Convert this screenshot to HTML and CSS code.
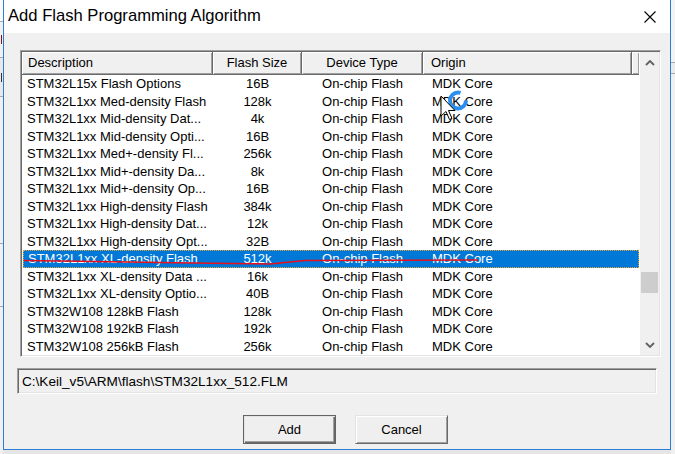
FILE: index.html
```html
<!DOCTYPE html>
<html>
<head>
<meta charset="utf-8">
<link rel="stylesheet" href="styles.css">
</head>
<body>
<div class="side side-left">
  <div class="frag f1"></div>
  <div class="frag f2"><span class="mark red"></span></div>
  <div class="frag f3"><span class="mark"></span></div>
  <div class="frag f4"></div>
  <div class="frag f5"></div>
</div>
<div class="dialog">
  <div class="titlebar">
    <span class="title">Add Flash Programming Algorithm</span>
    <svg class="close" width="12" height="12" viewBox="0 0 12 12"><path d="M0.5 0.5 L11.5 11.5 M11.5 0.5 L0.5 11.5" stroke="#000" stroke-width="1.1" fill="none"/></svg>
  </div>
  <div class="content">
    <div class="listbox">
      <div class="table">
        <div class="header">
          <div class="hcell left">Description</div>
          <div class="hcell">Flash Size</div>
          <div class="hcell">Device Type</div>
          <div class="hcell left origin">Origin</div>
          <div class="hcell filler"></div>
        </div>
        <div class="rows">
          <div class="row"><span class="c1">STM32L15x Flash Options</span><span class="c2">16B</span><span class="c3">On-chip Flash</span><span class="c4">MDK Core</span></div>
          <div class="row"><span class="c1">STM32L1xx Med-density Flash</span><span class="c2">128k</span><span class="c3">On-chip Flash</span><span class="c4">MDK Core</span></div>
          <div class="row"><span class="c1">STM32L1xx Mid-density Dat...</span><span class="c2">4k</span><span class="c3">On-chip Flash</span><span class="c4">MDK Core</span></div>
          <div class="row"><span class="c1">STM32L1xx Mid-density Opti...</span><span class="c2">16B</span><span class="c3">On-chip Flash</span><span class="c4">MDK Core</span></div>
          <div class="row"><span class="c1">STM32L1xx Med+-density Fl...</span><span class="c2">256k</span><span class="c3">On-chip Flash</span><span class="c4">MDK Core</span></div>
          <div class="row"><span class="c1">STM32L1xx Mid+-density Da...</span><span class="c2">8k</span><span class="c3">On-chip Flash</span><span class="c4">MDK Core</span></div>
          <div class="row"><span class="c1">STM32L1xx Mid+-density Op...</span><span class="c2">16B</span><span class="c3">On-chip Flash</span><span class="c4">MDK Core</span></div>
          <div class="row"><span class="c1">STM32L1xx High-density Flash</span><span class="c2">384k</span><span class="c3">On-chip Flash</span><span class="c4">MDK Core</span></div>
          <div class="row"><span class="c1">STM32L1xx High-density Dat...</span><span class="c2">12k</span><span class="c3">On-chip Flash</span><span class="c4">MDK Core</span></div>
          <div class="row"><span class="c1">STM32L1xx High-density Opt...</span><span class="c2">32B</span><span class="c3">On-chip Flash</span><span class="c4">MDK Core</span></div>
          <div class="row selected"><span class="c1">STM32L1xx XL-density Flash</span><span class="c2">512k</span><span class="c3">On-chip Flash</span><span class="c4">MDK Core</span></div>
          <div class="row"><span class="c1">STM32L1xx XL-density Data ...</span><span class="c2">16k</span><span class="c3">On-chip Flash</span><span class="c4">MDK Core</span></div>
          <div class="row"><span class="c1">STM32L1xx XL-density Optio...</span><span class="c2">40B</span><span class="c3">On-chip Flash</span><span class="c4">MDK Core</span></div>
          <div class="row"><span class="c1">STM32W108 128kB Flash</span><span class="c2">128k</span><span class="c3">On-chip Flash</span><span class="c4">MDK Core</span></div>
          <div class="row"><span class="c1">STM32W108 192kB Flash</span><span class="c2">192k</span><span class="c3">On-chip Flash</span><span class="c4">MDK Core</span></div>
          <div class="row"><span class="c1">STM32W108 256kB Flash</span><span class="c2">256k</span><span class="c3">On-chip Flash</span><span class="c4">MDK Core</span></div>
        </div>
      </div>
      <div class="scrollbar">
        <div class="sb-btn"><svg width="10" height="6" viewBox="0 0 10 6"><path d="M1 5 L5 1 L9 5" stroke="#606060" stroke-width="1.8" fill="none"/></svg></div>
        <div class="sb-track"><div class="sb-thumb"></div></div>
        <div class="sb-btn"><svg width="10" height="6" viewBox="0 0 10 6"><path d="M1 1 L5 5 L9 1" stroke="#606060" stroke-width="1.8" fill="none"/></svg></div>
      </div>
    </div>
    <div class="pathfield">C:\Keil_v5\ARM\flash\STM32L1xx_512.FLM</div>
    <div class="buttons">
      <div class="btn default">Add</div>
      <div class="btn">Cancel</div>
    </div>
  </div>
</div>
<div class="side side-right">
  <div class="frag r1"></div>
  <div class="frag r2"></div>
</div>
<svg class="overlay" width="675" height="454" viewBox="0 0 675 454">
  <polyline points="24,260.5 95,261.5 160,262.5 230,263.5 270,264 305,260.5 478,260" fill="none" stroke="#e8101a" stroke-width="1.4"/>
  <circle cx="458" cy="100.5" r="8" fill="none" stroke="#2b8ff0" stroke-width="4" stroke-dasharray="40 10"/>
  <path d="M441 96 L441 116 L446 111.5 L449.5 119.5 L452 118.5 L448.5 110.5 L455 110.5 Z" fill="#fff" stroke="#000" stroke-width="1" stroke-linejoin="miter"/>
</svg>
</body>
</html>
```
FILE: styles.css
```css
html, body {
  margin: 0;
  padding: 0;
}
body {
  width: 675px;
  height: 454px;
  overflow: hidden;
  background: #e6e6e6;
  display: flex;
  align-items: flex-start;
  position: relative;
  font-family: "Liberation Sans", Arial, sans-serif;
  font-size: 13px;
  color: #000;
}
.side {
  height: 454px;
  background: #f0f0f0;
  display: flex;
  flex-direction: column;
  overflow: hidden;
}
.side-left {
  width: 3px;
}
.side-right {
  flex: 1;
  background: #f0f0f0;
}
.frag {
  border-bottom: 1px solid #a8a8a8;
  display: flex;
  align-items: center;
}
.f1 { height: 21px; background: #fafafa; }
.f2 { height: 35px; background: #f0f0f0; }
.f3 { height: 38px; background: #e8e8e8; }
.f4 { height: 146px; background: #f0f0f0; }
.f5 { height: 62px; background: #f0f0f0; }
.r1 { height: 62px; background: #f3f3f3; }
.r2 { height: 10px; background: #eaeaea; }
.mark {
  display: block;
  width: 1px;
  height: 9px;
  margin-left: 1px;
  background: #333;
}
.mark.red { background: #8a1020; }
.dialog {
  width: 668px;
  height: 450px;
  box-sizing: border-box;
  border: 1px solid #2a7fd4;
  border-top: 0;
  background: #f0f0f0;
  display: flex;
  flex-direction: column;
}
.titlebar {
  height: 33px;
  background: #fff;
  display: flex;
  align-items: center;
  justify-content: space-between;
  padding: 0 14px 1px 4px;
  box-sizing: border-box;
}
.title {
  font-size: 16.6px;
  color: #000;
}
.close {
  display: block;
  margin-top: 1px;
}
.content {
  padding: 17px 8px 0 13px;
}
.listbox {
  margin-left: 3px;
  width: 641px;
  height: 307px;
  box-sizing: border-box;
  border: 1px solid;
  border-color: #a0a0a0 #ffffff #ffffff #a0a0a0;
  box-shadow: inset 1px 1px 0 #696969, inset -1px -1px 0 #e3e3e3;
  padding: 1px;
  display: flex;
  background: #fff;
}
.table {
  width: 618px;
  display: flex;
  flex-direction: column;
}
.header {
  display: grid;
  grid-template-columns: 191px 89px 121px 209px 1fr;
  height: 23px;
  background: #f0f0f0;
}
.hcell {
  box-sizing: border-box;
  border-right: 1px solid #696969;
  border-bottom: 1px solid #696969;
  box-shadow: inset 1px 1px 0 #ffffff, inset -1px -1px 0 #a0a0a0;
  display: flex;
  align-items: center;
  justify-content: center;
  padding-bottom: 1px;
}
.hcell.left {
  justify-content: flex-start;
  padding-left: 6px;
}
.hcell.origin {
  padding-left: 8px;
}
.hcell.filler {
  border-right: 0;
}
.rows {
  display: flex;
  flex-direction: column;
}
.row {
  display: grid;
  grid-template-columns: 191px 89px 121px 209px;
  height: 17.5px;
  align-items: center;
  line-height: 17px;
  white-space: nowrap;
  box-sizing: border-box;
}
.row .c1 { padding-left: 5px; }
.row .c2, .row .c3 { text-align: center; }
.row .c4 { padding-left: 9px; }
.row.selected {
  background: #0078d7;
  color: #fff;
  outline: 1px dotted #e6a53a;
  outline-offset: -1px;
  margin-left: 1px;
  grid-template-columns: 190px 89px 121px 209px;
}
.scrollbar {
  width: 19px;
  margin-left: 1px;
  display: flex;
  flex-direction: column;
  background: #f0f0f0;
}
.sb-btn {
  height: 22px;
  display: flex;
  align-items: center;
  justify-content: center;
}
.sb-btn:last-child {
  height: 21px;
}
.sb-track {
  flex: 1;
}
.sb-thumb {
  margin: 198px 1px 0 1px;
  height: 21px;
  background: #cdcdcd;
}
.pathfield {
  margin-top: 11px;
  width: 640px;
  height: 26px;
  box-sizing: border-box;
  border: 1px solid;
  border-color: #a0a0a0 #ffffff #ffffff #a0a0a0;
  box-shadow: inset 1px 1px 0 #696969, inset -1px -1px 0 #e3e3e3;
  padding: 2px 0 0 4px;
  line-height: 21px;
  font-size: 13.6px;
  background: #f0f0f0;
  white-space: nowrap;
}
.buttons {
  display: flex;
  gap: 19px;
  margin-top: 21px;
  padding-left: 226px;
}
.btn {
  width: 93px;
  height: 29px;
  box-sizing: border-box;
  border: 1px solid;
  border-color: #e3e3e3 #696969 #696969 #e3e3e3;
  box-shadow: inset 1px 1px 0 #ffffff, inset -1px -1px 0 #a0a0a0;
  background: #efefef;
  display: flex;
  align-items: center;
  justify-content: center;
  padding-bottom: 1px;
}
.btn.default {
  border-color: #646464;
  box-shadow: inset 1px 1px 0 #e3e3e3, inset -1px -1px 0 #696969, inset -2px -2px 0 #a0a0a0;
}
.overlay {
  position: absolute;
  left: 0;
  top: 0;
  pointer-events: none;
}
```
